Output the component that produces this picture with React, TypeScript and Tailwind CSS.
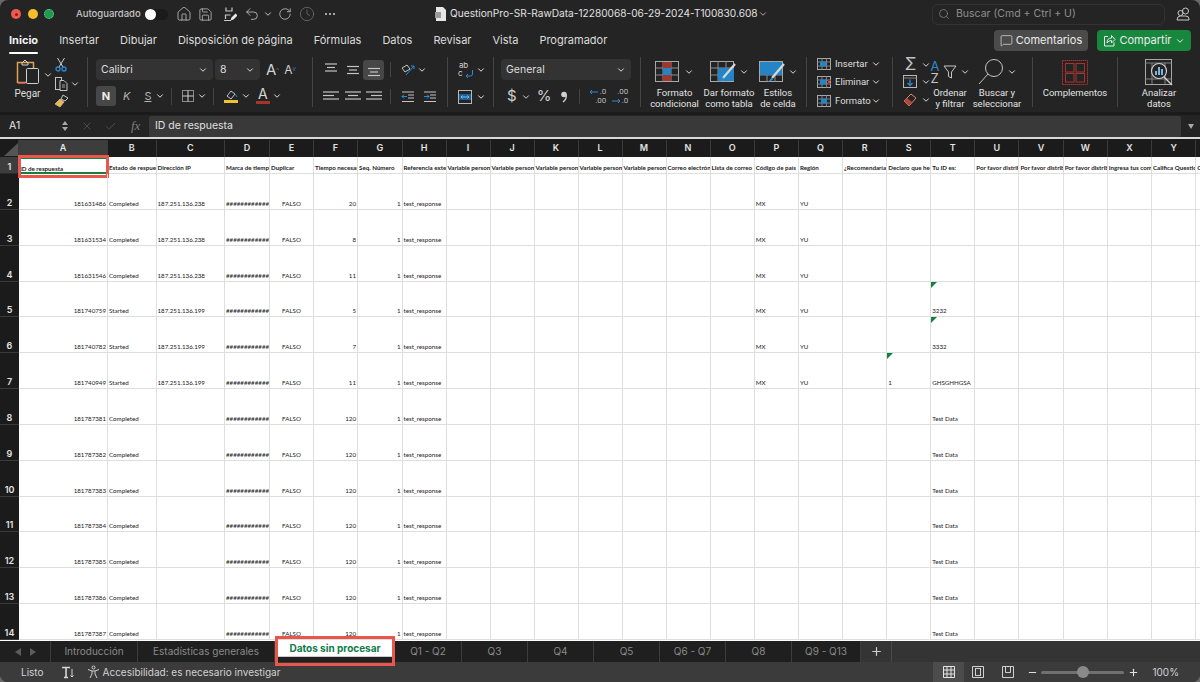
import React from 'react';
import { ChevronDown, Home, Save, Undo2, RotateCw, Clock, Search, MessageSquare, Plus, Minus, Check, X } from 'lucide-react';

const Chev = ({ className = 'text-[#d8d8d8]' }: { className?: string }) => (
  <ChevronDown size={10} strokeWidth={2.4} className={`shrink-0 ${className}`} />
);

const Svg = ({ w, h, children, className = '' }: { w: number; h: number; children: React.ReactNode; className?: string }) => (
  <svg width={w} height={h} viewBox={`0 0 ${w} ${h}`} fill="none" stroke="#c4c4c4" strokeWidth="1" className={`shrink-0 ${className}`}>
    {children}
  </svg>
);

const Lines = ({ rows, y = 2 }: { rows: [number, number][]; y?: number }) => (
  <Svg w={18} h={14}>
    {rows.map(([a, b], i) => (
      <path key={i} d={`M${a} ${y + i * 3.5}H${b}`} strokeWidth="1.2" />
    ))}
  </Svg>
);

const PasteIcon = () => (
  <Svg w={24} h={26}>
    <rect x="1.5" y="3.5" width="16" height="20" stroke="#e0a050" strokeWidth="1.5" />
    <path d="M2 24H9" stroke="#e06070" strokeWidth="1.5" />
    <path d="M6 4l3-3 3 3v2H6z" stroke="#d0d0d0" />
    <rect x="10.5" y="9.5" width="12" height="15" rx="1" fill="#242424" stroke="#d0d0d0" />
  </Svg>
);

const Cut = () => (
  <Svg w={14} h={15}>
    <path d="M3.5 1l5.5 9M10.5 1L5 10" stroke="#d0d0d0" />
    <circle cx="4" cy="12" r="2" stroke="#2e88d0" strokeWidth="1.3" />
    <circle cx="10" cy="12" r="2" stroke="#2e88d0" strokeWidth="1.3" />
  </Svg>
);

const CopyIcon = () => (
  <Svg w={15} h={15}>
    <rect x="1.5" y="1.5" width="6" height="12" />
    <path d="M6 4.5h4l3 3v7H6z" fill="#242424" />
    <path d="M8 9h3M8 11h3" strokeWidth=".8" />
  </Svg>
);

const Brush = () => (
  <Svg w={15} h={14}>
    <path d="M9 1l5 3-3 3-4-2z" fill="#242424" />
    <path d="M6 5l4 3-4 5-5-3z" fill="#e9b949" stroke="#c4c4c4" strokeWidth=".7" />
  </Svg>
);

const SaveAs = () => (
  <Svg w={16} h={16}>
    <path d="M10 14.5H3q-1.500-1.500V3q0-1.500 1.500-1.500h8l3 3V8" stroke="#c8c8c8" strokeWidth="1.2" />
    <path d="M5 1.500v3.500h6V1.500M4.500 13V9h5" stroke="#c8c8c8" strokeWidth="1.200" />
    <path d="M9.500 14.500l1-3 4-4 2 2-4 4z" fill="#e8e8e8" stroke="none" />
  </Svg>
);

const BorderIcon = () => (
  <Svg w={14} h={14}>
    <rect x="1.5" y="1.5" width="11" height="11" stroke="#8a8a8a" />
    <path d="M7 1.5v11M1.5 7h11" stroke="#d0d0d0" />
  </Svg>
);

const FillIcon = () => (
  <Svg w={15} h={15}>
    <path d="M3 7l4-5 4 3-4 5z" />
    <path d="M11 5l2 3" stroke="#1f8fe0" />
    <rect x="0" y="11" width="14" height="3" fill="#edc42d" stroke="none" />
  </Svg>
);

const FontColor = () => (
  <div className="flex flex-col items-center w-[15px] leading-none">
    <span className="text-[14px] text-[#d8d8d8] leading-[12px]">A</span>
    <span className="w-[14px] h-[3px] mt-[1px] bg-[#a5352c]" />
  </div>
);

const Orient = () => (
  <Svg w={16} h={14}>
    <path d="M2 5l5-3 3 4-5 3z" />
    <path d="M6 12l8-9M11 3h3v3" stroke="#1f8fe0" />
  </Svg>
);

const Indent = ({ flip = false }: { flip?: boolean }) => (
  <Svg w={14} h={12}>
    <path d="M1 1h12M7 4h6M7 7h6M1 10.5h12" />
    <path d={flip ? 'M1 5.500h5M4 3.500l2 2-2 2' : 'M1 5.500h5M3 3.500l-2 2 2 2'} stroke="#1f8fe0" />
  </Svg>
);

const Wrap = () => (
  <div className="relative w-[14px] h-[18px] text-[8px] leading-[8px] text-[#cfcfcf] tracking-tight">
    <span className="block ml-[1px]">ab</span>
    <span className="block">c</span>
    <svg width="9" height="9" viewBox="0 0 9 9" fill="none" stroke="#2e88d0" className="absolute right-[-2px] bottom-[1px]">
      <path d="M7.500 1v4q0 2-2 2H1M3 5L1 7l2 2" />
    </svg>
  </div>
);

const Merge = () => (
  <Svg w={14} h={14}>
    <rect x=".5" y=".5" width="13" height="13" stroke="#b8b8b8" />
    <rect x="1" y="4" width="12" height="6" fill="#1c5f94" stroke="none" />
    <path d="M3 7h8M4.500 5.500L3 7l1.500 1.500M9.500 5.500L11 7 9.500 8.500" stroke="#7cc0f0" />
  </Svg>
);

const Comma = () => (
  <Svg w={8} h={12}>
    <circle cx="4" cy="3.500" r="2.800" fill="#cfcfcf" stroke="none" />
    <path d="M6.300 4q.5 4-3.300 7" stroke="#cfcfcf" strokeWidth="1.300" />
  </Svg>
);

const DecA = ({ dir }: { dir: 'inc' | 'dec' }) => (
  <div className="relative w-[17px] h-[17px] text-[8px] leading-[8px] text-[#bdbdbd] text-right font-['Roboto',sans-serif]">
    <span className="block">{dir === 'inc' ? '.0' : '.00'}</span>
    <span className="block mt-[1px]">{dir === 'inc' ? '.00' : '.0'}</span>
    <svg width="10" height="6" viewBox="0 0 10 6" fill="none" stroke="#2e88d0" className={`absolute left-0 ${dir === 'inc' ? 'top-[1px]' : 'bottom-[1px]'}`}>
      {dir === 'inc' ? <path d="M9 3H1M3 1L1 3l2 2" /> : <path d="M1 3h8M7 1l2 2-2 2" />}
    </svg>
  </div>
);

const GridIcon = ({ variant }: { variant: 'cond' | 'table' | 'style' }) => (
  <Svg w={26} h={22}>
    <rect x=".5" y=".5" width="23" height="20" stroke="#a8a8a8" />
    <path d="M.5 7h23M.5 14h23M8 .5v20M16 .5v20" stroke="#8c8c8c" />
    {variant === 'cond' && (
      <>
        <rect x="8" y="1" width="8" height="6" fill="#a5352c" stroke="none" />
        <rect x="8" y="14" width="8" height="6" fill="#a5352c" stroke="none" />
        <rect x="8" y="7" width="8" height="7" fill="#2484c6" stroke="none" />
      </>
    )}
    {variant === 'table' && (
      <>
        <rect x="8" y="7" width="16" height="13" fill="#2484c6" stroke="none" />
        <path d="M25 3L13 17" stroke="#d8d8d8" strokeWidth="2.200" />
        <path d="M13 16l-4 5 5-2z" fill="#2e88d0" stroke="none" />
      </>
    )}
    {variant === 'style' && (
      <>
        <rect x="1" y="1" width="22" height="13" fill="#2484c6" stroke="none" />
        <path d="M25 3L13 17" stroke="#d8d8d8" strokeWidth="2.200" />
        <path d="M13 16l-4 5 5-2z" fill="#2e88d0" stroke="none" />
      </>
    )}
  </Svg>
);

const CellIcon = ({ mark }: { mark: 'ins' | 'del' | 'fmt' }) => (
  <Svg w={15} h={14}>
    <rect x=".5" y="1.5" width="13" height="11" stroke="#a8a8a8" />
    <path d="M5 1.500v11M9.500 1.500v11M.5 5h13M.5 9h13" stroke="#808080" />
    <rect x={mark === 'fmt' ? 4 : 3} y="4.5" width="6" height="5" fill="#2484c6" stroke="none" />
    {mark === 'del' && <path d="M10 5l4 4M14 5l-4 4" stroke="#d9483b" />}
  </Svg>
);

const FillDown = () => (
  <Svg w={15} h={14}>
    <rect x=".5" y=".5" width="13" height="12" stroke="#b8b8b8" />
    <path d="M.5 3h13" stroke="#808080" />
    <path d="M7 4.500v6M4.500 8L7 10.500 9.500 8" stroke="#2e88d0" strokeWidth="1.300" />
  </Svg>
);

const Eraser = () => (
  <Svg w={15} h={14}>
    <path d="M1 8l7-7 5 4-7 8z" stroke="#d98a80" />
    <path d="M1 8l3-3 5 4-3 4z" fill="#b5453a" stroke="none" />
  </Svg>
);

const SortIcon = () => (
  <div className="flex items-center h-[28px]">
    <div className="flex flex-col text-[13px] leading-[12px] w-[12px]">
      <span className="text-[#2e88d0]">A</span>
      <span className="text-[#c4c4c4]">Z</span>
    </div>
    <Svg w={14} h={14}>
      <path d="M1 1h12L8.500 7v6l-3-1.500V7z" />
    </Svg>
  </div>
);

const Magnifier = () => (
  <Svg w={26} h={28}>
    <circle cx="16" cy="10" r="8.500" />
    <path d="M10 16L1 26" />
  </Svg>
);

const Addins = () => (
  <Svg w={26} h={25}>
    <rect x=".5" y=".5" width="25" height="24" stroke="#a5352c" strokeDasharray="1.500 .5" />
    <rect x="3.5" y="3.5" width="8.5" height="8.5" stroke="#a5352c" />
    <rect x="14" y="3.5" width="8.5" height="8.5" stroke="#a5352c" />
    <rect x="3.5" y="13.5" width="8.5" height="8.5" stroke="#a5352c" />
    <rect x="14" y="13.5" width="8.5" height="8.5" stroke="#a5352c" />
  </Svg>
);

const Analyze = () => (
  <Svg w={29} h={27}>
    <rect x=".5" y=".5" width="26" height="25" stroke="#a8a8a8" />
    <path d="M.5 4h26M.5 20h26M7 4v21M20 4v21" stroke="#808080" />
    <circle cx="14" cy="12" r="7.500" fill="#242424" stroke="#d0d0d0" strokeWidth="1.200" />
    <path d="M19 18l8 8" stroke="#d0d0d0" strokeWidth="1.400" />
    <path d="M11 16v-4M14 16V8M17 16v-6" stroke="#7bb6e0" strokeWidth="2" />
  </Svg>
);

function Group({ w, children, className = '' }: { w: string; children: React.ReactNode; className?: string }) {
  return <div className={`${w} shrink-0 flex border-r border-[#444444] ${className}`}>{children}</div>;
}

function Big({ icon, lines, w, chev = true }: { icon: React.ReactNode; lines: string[]; w: string; chev?: boolean }) {
  return (
    <div className={`${w} shrink-0 flex flex-col items-center`}>
      <div className="h-[30px] shrink-0 flex items-center gap-[3px] whitespace-nowrap">
        {icon}
        {chev && <Chev />}
      </div>
      <div className="mt-[1px] font-['Roboto',sans-serif] text-[9.5px] leading-[10.5px] text-center text-[#e2e2e2] whitespace-nowrap">
        {lines.map((l) => (
          <div key={l}>{l}</div>
        ))}
      </div>
    </div>
  );
}

const cols = ['A','B','C','D','E','F','G','H','I','J','K','L','M','N','O','P','Q','R','S','T','U','V','W','X','Y','Z'];
const heads = ['ID de respuesta','Estado de respuesta','Dirección IP','Marca de tiempo','Duplicar','Tiempo necesario','Seq. Número','Referencia externa','Variable personalizada','Variable personalizada','Variable personalizada','Variable personalizada','Variable personalizada','Correo electrónico','Lista de correo','Código de país','Región','¿Recomendaría','Declaro que he','Tu ID es:','Por favor distribuye','Por favor distribuye','Por favor distribuye','Ingresa tus comentarios','Califica Questio','Califica'];

type Row = { id: string; st: string; ip: string; t: string; mx: boolean; s?: string; tu?: string; tri?: 'S' | 'T' };
const rows: Row[] = [
  { id: '181631486', st: 'Completed', ip: '187.251.136.238', t: '20', mx: true },
  { id: '181631534', st: 'Completed', ip: '187.251.136.238', t: '8', mx: true },
  { id: '181631546', st: 'Completed', ip: '187.251.136.238', t: '11', mx: true },
  { id: '181740759', st: 'Started', ip: '187.251.136.199', t: '5', mx: true, tu: '3232', tri: 'T' },
  { id: '181740782', st: 'Started', ip: '187.251.136.199', t: '7', mx: true, tu: '3332', tri: 'T' },
  { id: '181740949', st: 'Started', ip: '187.251.136.199', t: '11', mx: true, s: '1', tu: 'GHSGHHGSA', tri: 'S' },
  ...['1', '2', '3', '4', '5', '6', '7'].map((n) => ({ id: `18178738${n}`, st: 'Completed', ip: '', t: '120', mx: false, tu: 'Test Data' })),
];

const cell = 'border-r border-b border-[#dedede] overflow-hidden whitespace-nowrap flex items-end pb-[1px] px-[1px] text-[6.2px] leading-[8px] text-[#222222]';
const tri = 'absolute left-0 top-0 w-0 h-0 border-t-[6px] border-r-[6px] border-t-[#11813f] border-r-transparent';

function Cell({ v, right, center, triangle }: { v?: string; right?: boolean; center?: boolean; triangle?: boolean }) {
  return (
    <div className={`${cell} relative ${right ? 'justify-end' : ''} ${center ? 'justify-center' : ''}`}>
      {triangle && <span className={tri} />}
      {v}
    </div>
  );
}

function Sheet() {
  return (
    <div className="flex-1 min-h-0 overflow-hidden bg-white font-['Lato',sans-serif] grid grid-cols-[19px_89px_48.5px_68.5px_45px_44px_44px_44.5px_44px_44px_44px_44px_44px_44px_44px_44.2px_44.2px_44.2px_44.2px_44px_44px_44.2px_44.2px_44.2px_44.2px_44.2px_44px] grid-rows-[17px_17px_repeat(13,35.85px)]">
      <div className="bg-[#1b1b1b] border-r border-[#3a3a3a] flex items-end justify-end">
        <svg width="14" height="13" viewBox="0 0 14 13" className="mb-[1px]"><path d="M14 0v13H0z" fill="#555555" /></svg>
      </div>
      {cols.map((c, i) => (
        <div key={c} className={`${i === 0 ? 'bg-[#3d3d3d]' : 'bg-[#1b1b1b]'} border-r border-[#3a3a3a] flex items-center justify-center pb-[1px] font-['Inter',sans-serif] text-[9px] font-semibold text-[#e4e4e4]`}>
          {c}
        </div>
      ))}
      <div className="bg-[#3d3d3d] border-b border-[#2a2a2a] flex items-end justify-center pb-[1px] font-['Inter',sans-serif] text-[9px] leading-[10px] font-semibold text-[#e4e4e4]">1</div>
      {heads.map((h, i) =>
        i === 0 ? (
          <div key={i} className="relative flex items-end pb-[1px] px-[1px] text-[6.2px] leading-[8px] font-bold text-[#222222] whitespace-nowrap">
            {h}
            <span className="absolute inset-0 border-t-[2px] border-b-[2px] border-[#15803d]" />
            <span className="absolute -left-[1px] -right-[1px] -top-[2px] -bottom-[4px] border-[3px] border-[#e8564c]" />
          </div>
        ) : (
          <div key={i} className={`${cell} font-bold`}>{h}</div>
        ),
      )}
      {rows.map((r, n) => (
        <React.Fragment key={r.id}>
          <div className="bg-[#1b1b1b] border-b border-[#3a3a3a] flex items-end justify-center pb-[1px] font-['Inter',sans-serif] text-[9px] leading-[10px] font-semibold text-[#e4e4e4]">{n + 2}</div>
          <Cell v={r.id} right />
          <Cell v={r.st} />
          <Cell v={r.ip} />
          <Cell v="############" />
          <Cell v="FALSO" center />
          <Cell v={r.t} right />
          <Cell v="1" right />
          <Cell v="test_response" />
          {['I','J','K','L','M','N','O'].map((c) => <Cell key={c} />)}
          <Cell v={r.mx ? 'MX' : ''} />
          <Cell v={r.mx ? 'YU' : ''} />
          <Cell />
          <Cell v={r.s} triangle={r.tri === 'S'} />
          <Cell v={r.tu} triangle={r.tri === 'T'} />
          {['U','V','W','X','Y','Z'].map((c) => <Cell key={c} />)}
        </React.Fragment>
      ))}
    </div>
  );
}

function SheetTab({ label, w }: { label: string; w: string }) {
  return (
    <div className={`${w} shrink-0 flex items-center justify-center border-r border-[#3c3c3c] text-[10px] text-[#8a8a8a]`}>
      {label}
    </div>
  );
}

export default function App() {
  return (
    <div className="w-[1200px] h-[682px] bg-[#6a6a6a] overflow-hidden font-['Inter',sans-serif]">
      <div className="w-full h-full rounded-[8px] overflow-hidden flex flex-col bg-[#242424] text-[#e6e6e6]">
        {/* title bar */}
        <div className="h-[28px] shrink-0 flex items-center pl-[11px] pr-[8px]">
          <span className="w-[10px] h-[10px] rounded-full bg-[#ee5a50] flex items-center justify-center"><span className="w-[3px] h-[3px] rounded-full bg-[#8e1c16]" /></span>
          <span className="ml-[7px] w-[10px] h-[10px] rounded-full bg-[#f5bd2e]" />
          <span className="ml-[6px] w-[10px] h-[10px] rounded-full bg-[#1f9a4e] border border-dotted border-[#7fd6a0]" />
          <span className="ml-[22px] w-[63px] whitespace-nowrap text-[9.5px] font-medium text-[#c4c4c4]">Autoguardado</span>
          <span className="ml-[6px] w-[23px] h-[11px] rounded-full bg-[#1b1b1b] flex items-center">
            <span className="w-[11px] h-[11px] rounded-full bg-white" />
          </span>
          <Home size={16} strokeWidth={1.2} className="ml-[8px] shrink-0 text-[#c8c8c8]" />
          <Save size={15} strokeWidth={1.2} className="ml-[6px] shrink-0 text-[#c8c8c8]" />
          <span className="ml-[8px]"><SaveAs /></span>
          <Undo2 size={16} strokeWidth={1.2} className="ml-[7px] shrink-0 text-[#c8c8c8]" />
          <Chev className="ml-[3px] text-[#c8c8c8]" />
          <RotateCw size={14} strokeWidth={1.3} className="ml-[5px] shrink-0 text-[#c8c8c8]" />
          <Clock size={16} strokeWidth={1} className="ml-[7px] shrink-0 text-[#7c7c7c]" />
          <span className="ml-[10px] flex gap-[2px]">
            <i className="w-[2px] h-[2px] rounded-full bg-[#d0d0d0]" />
            <i className="w-[2px] h-[2px] rounded-full bg-[#d0d0d0]" />
            <i className="w-[2px] h-[2px] rounded-full bg-[#d0d0d0]" />
          </span>
          <svg width="12" height="14" viewBox="0 0 12 14" className="ml-[100px] shrink-0">
            <path d="M1 0h7l3 3v11H1z" fill="#e6e6e6" />
            <rect x="0" y="5" width="6" height="6" fill="#9a9a9a" />
          </svg>
          <span className="ml-[3px] w-[308px] shrink-0 text-[10.15px] text-[#e0e0e0] whitespace-nowrap">QuestionPro-SR-RawData-12280068-06-29-2024-T100830.608</span>
          <Chev className="ml-[0px] text-[#a8a8a8]" />
          <div className="ml-[164px] w-[233px] shrink-0 h-[21px] rounded-[6px] border border-[#333333] flex items-center pl-[5px] gap-[6px] text-[10.5px] text-[#8e8e8e]">
            <Search size={12} strokeWidth={1.4} />
            Buscar (Cmd + Ctrl + U)
          </div>
          <svg width="14" height="14" viewBox="0 0 14 14" fill="none" stroke="#c8c8c8" className="ml-[11px] shrink-0">
            <circle cx="9.500" cy="4" r="3" />
            <circle cx="4.500" cy="6" r="2.500" />
            <path d="M1 13q0-4 3.500-4h5q3.500 0 3.500 3v1z" />
          </svg>
        </div>

        {/* tabs */}
        <div className="h-[24px] shrink-0 flex items-center pl-[9px] pr-[9px] pt-[1px] text-[11px] text-[#dcdcdc] gap-[21px] whitespace-nowrap">
          <span className="relative font-bold text-[#f2f2f2]">Inicio<span className="absolute left-0 right-0 -bottom-[5px] h-[2px] rounded bg-white" /></span>
          <span>Insertar</span>
          <span>Dibujar</span>
          <span>Disposición de página</span>
          <span>Fórmulas</span>
          <span>Datos</span>
          <span>Revisar</span>
          <span>Vista</span>
          <span>Programador</span>
          <div className="ml-auto w-[94px] h-[21px] rounded-[4px] bg-[#4b4b4b] flex items-center justify-center gap-[3px] text-[11px] text-[#ececec]">
            <MessageSquare size={13} strokeWidth={1.2} />Comentarios
          </div>
          <div className="-ml-[12px] w-[94px] h-[21px] rounded-[4px] bg-[#18873e] flex items-center justify-center gap-[3px] text-[11px] text-[#ececec]">
            <svg width="13" height="13" viewBox="0 0 13 13" fill="none" stroke="#ececec">
              <path d="M5 2.500H1.500v9.500h9.500V8.500" />
              <path d="M4 9q0-5 4.500-5V1.500L12 5.500 8.500 9V6.500Q5.500 6.500 4 9z" />
            </svg>
            Compartir<Chev className="text-[#ececec]" />
          </div>
        </div>

        {/* ribbon */}
        <div className="h-[60px] shrink-0 flex py-[5px] text-[10px] text-[#dedede]">
          <Group w="w-[88px]" className="pl-[12px]">
            <div className="w-[31px] flex flex-col items-center">
              <div className="flex items-start pt-[2px] h-[30px] shrink-0"><PasteIcon /></div>
              <span className="mt-[1px] font-['Roboto',sans-serif] text-[10px] leading-[11px]">Pegar</span>
            </div>
            <div className="pt-[13px] w-[7px]"><Chev /></div>
            <div className="ml-[4px] flex flex-col gap-[3px]">
              <span className="mb-[1px]"><Cut /></span>
              <div className="flex items-center gap-[1px]"><CopyIcon /><Chev /></div>
              <Brush />
            </div>
          </Group>

          <Group w="w-[225px]" className="pl-[8px] pt-[2px] flex-col">
            <div className="flex items-center gap-[2px]">
              <div className="w-[117px] h-[21px] rounded-[4px] bg-[#333333] flex items-center justify-between px-[5px] text-[10.5px]">Calibri<Chev /></div>
              <div className="w-[45px] h-[21px] rounded-[4px] bg-[#333333] flex items-center justify-between px-[5px] text-[10.5px]">8<Chev /></div>
              <span className="ml-[4px] text-[15px] leading-none text-[#d0d0d0]">A<sup className="text-[#2e88d0] text-[6px]">^</sup></span>
              <span className="ml-[3px] text-[12px] leading-none text-[#d0d0d0]">A<sup className="text-[#2e88d0] text-[6px]">v</sup></span>
            </div>
            <div className="mt-[6px] flex items-center text-[11px]">
              <span className="w-[20px] h-[20px] rounded-[3px] bg-[#474747] flex items-center justify-center font-bold text-[#eeeeee]">N</span>
              <span className="ml-[7px] italic text-[#b4b4b4]">K</span>
              <span className="ml-[14px] underline text-[#b4b4b4]">S</span>
              <Chev className="ml-[4px]" />
              <span className="ml-[6px] w-px h-[17px] bg-[#444444]" />
              <span className="ml-[9px]"><BorderIcon /></span>
              <Chev className="ml-[2px]" />
              <span className="ml-[6px] w-px h-[17px] bg-[#444444]" />
              <span className="ml-[10px]"><FillIcon /></span>
              <Chev className="ml-[2px]" />
              <span className="ml-[4px]"><FontColor /></span>
              <Chev className="ml-[2px]" />
            </div>
          </Group>

          <Group w="w-[135px]" className="pl-[9px] pt-[2px] flex-col">
            <div className="flex items-center h-[21px]">
              <Lines y={1} rows={[[3, 15], [5, 13], [3, 15]]} />
              <span className="ml-[4px]"><Lines y={3.5} rows={[[3, 15], [5, 13], [3, 15]]} /></span>
              <span className="ml-[1px] w-[21px] h-[20px] rounded-[3px] bg-[#474747] flex items-center justify-center"><Lines y={5.5} rows={[[3, 15], [5, 13], [3, 15]]} /></span>
              <span className="ml-[6px] w-px h-[15px] bg-[#444444]" />
              <span className="ml-[9px]"><Orient /></span>
              <Chev className="ml-[1px]" />
            </div>
            <div className="flex items-center h-[21px] mt-[6px]">
              <Lines rows={[[1, 17], [1, 12], [1, 17]]} />
              <span className="ml-[4px]"><Lines rows={[[1, 17], [4, 14], [1, 17]]} /></span>
              <span className="ml-[3px]"><Lines rows={[[1, 17], [6, 17], [1, 17]]} /></span>
              <span className="ml-[7px] w-px h-[15px] bg-[#444444]" />
              <span className="ml-[10px]"><Indent /></span>
              <span className="ml-[8px]"><Indent flip /></span>
            </div>
          </Group>

          <Group w="w-[46px]" className="pl-[10px] pt-[2px] flex-col">
            <div className="flex items-center gap-[3px] h-[21px]"><Wrap /><Chev className="ml-[1px]" /></div>
            <div className="flex items-center gap-[3px] h-[21px] mt-[6px]"><Merge /><Chev className="ml-[1px]" /></div>
          </Group>

          <Group w="w-[147px]" className="pl-[7px] pt-[2px] flex-col">
            <div className="w-[130px] h-[21px] rounded-[4px] bg-[#333333] flex items-center justify-between px-[5px] text-[10.5px]">General<Chev /></div>
            <div className="flex items-center h-[21px] mt-[6px] text-[#cfcfcf]">
              <span className="ml-[6px] text-[15px]">$</span>
              <Chev className="ml-[4px]" />
              <span className="ml-[6px] text-[15px]">%</span>
              <span className="ml-[9px]"><Comma /></span>
              <span className="ml-[11px] w-px h-[15px] bg-[#444444]" />
              <span className="ml-[9px]"><DecA dir="inc" /></span>
              <span className="ml-[5px]"><DecA dir="dec" /></span>
            </div>
          </Group>

          <Group w="w-[166px]" className="pl-[10px] text-[#e2e2e2]">
            <Big w="w-[47px]" icon={<GridIcon variant="cond" />} lines={['Formato', 'condicional']} />
            <Big w="w-[62px]" icon={<GridIcon variant="table" />} lines={['Dar formato', 'como tabla']} />
            <Big w="w-[36px]" icon={<GridIcon variant="style" />} lines={['Estilos', 'de celda']} />
          </Group>

          <Group w="w-[86px]" className="pl-[10px] flex-col gap-[4px] font-['Roboto',sans-serif] text-[9.5px]">
            {([['Insertar', 'ins'], ['Eliminar', 'del'], ['Formato', 'fmt']] as const).map(([t, m]) => (
              <div key={t} className="flex items-center h-[14.5px]">
                <CellIcon mark={m} />
                <span className="ml-[3px] w-[36px]">{t}</span>
                <Chev />
              </div>
            ))}
          </Group>

          <Group w="w-[140px]" className="pl-[10px]">
            <div className="w-[28px] flex flex-col gap-[3px] text-[#c4c4c4]">
              <div className="flex items-center h-[15px] gap-[3px]"><span className="w-[15px] text-[17px] leading-none text-center">Σ</span><Chev /></div>
              <div className="flex items-center h-[15px] gap-[3px]"><FillDown /><Chev /></div>
              <div className="flex items-center h-[15px] gap-[3px]"><Eraser /><Chev /></div>
            </div>
            <Big w="w-[38px]" icon={<SortIcon />} lines={['Ordenar', 'y filtrar']} />
            <Big w="w-[56px]" icon={<Magnifier />} lines={['Buscar y', 'seleccionar']} />
          </Group>

          <Group w="w-[85px]" className="justify-center">
            <Big w="w-full" chev={false} icon={<Addins />} lines={['Complementos']} />
          </Group>

          <div className="w-[82px] shrink-0 flex justify-center">
            <Big w="w-full" chev={false} icon={<Analyze />} lines={['Analizar', 'datos']} />
          </div>
        </div>

        {/* formula bar */}
        <div className="h-[3px] shrink-0 bg-[#1a1a1a]" />
        <div className="h-[22px] shrink-0 flex items-center pl-[9px] pr-[4px] text-[10.5px]">
          <span className="w-[52px]">A1</span>
          <div className="w-[8px] flex flex-col gap-[2px] items-center">
            <span className="w-0 h-0 border-x-[3px] border-x-transparent border-b-[4px] border-b-[#a8a8a8]" />
            <span className="w-0 h-0 border-x-[3px] border-x-transparent border-t-[4px] border-t-[#a8a8a8]" />
          </div>
          <X size={12} strokeWidth={1.3} className="ml-[12px] text-[#5e5e5e]" />
          <Check size={13} strokeWidth={1.2} className="ml-[11px] text-[#5e5e5e]" />
          <span className="ml-[14px] w-[15px] font-['Liberation_Serif',serif] italic text-[13px] text-[#7e7e7e]">fx</span>
          <div className="ml-[3px] flex-1 h-[21px] rounded-[2px] bg-[#393939] flex items-center pl-[6px] text-[#e0e0e0]">ID de respuesta</div>
          <span className="ml-[7px] mr-[2px] w-0 h-0 border-x-[3.5px] border-x-transparent border-t-[5px] border-t-[#a8a8a8]" />
        </div>
        <div className="h-[3px] shrink-0 bg-[#d8d8d8] border-b border-[#1a1a1a]" />

        <Sheet />

        {/* sheet tabs */}
        <div className="h-[21px] shrink-0 flex bg-[#343434]">
          <div className="w-[51px] shrink-0 bg-[#1f1f1f] flex items-center justify-center gap-[9px] border-r border-[#3c3c3c]">
            <span className="w-0 h-0 border-y-[4px] border-y-transparent border-r-[6px] border-r-[#5c5c5c]" />
            <span className="w-0 h-0 border-y-[4px] border-y-transparent border-l-[6px] border-l-[#5c5c5c]" />
          </div>
          <div className="flex bg-[#1f1f1f]">
            <SheetTab label="Introducción" w="w-[87px]" />
            <SheetTab label="Estadísticas generales" w="w-[137px]" />
            <div className="relative w-[120px] shrink-0 z-10">
              <div className="mx-[3px] h-[16px] bg-white flex items-center justify-center text-[10px] font-bold text-[#0f7b4a] border-b-[1px] border-[#cccccc]">Datos sin procesar</div>
              <span className="absolute left-0 right-0 -top-[5px] -bottom-[4px] border-[3px] border-[#e8564c]" />
            </div>
            <SheetTab label="Q1 - Q2" w="w-[67px]" />
            <SheetTab label="Q3" w="w-[66px]" />
            <SheetTab label="Q4" w="w-[66px]" />
            <SheetTab label="Q5" w="w-[66px]" />
            <SheetTab label="Q6 - Q7" w="w-[66px]" />
            <SheetTab label="Q8" w="w-[66px]" />
            <SheetTab label="Q9 - Q13" w="w-[69px]" />
          </div>
          <div className="w-[31px] flex items-center justify-center border-r border-[#4a4a4a] text-[#cfcfcf]"><Plus size={13} strokeWidth={2.2} /></div>
        </div>

        {/* status bar */}
        <div className="h-[20px] shrink-0 flex items-center bg-[#3b3b3b] pl-[21px] text-[10px] text-[#d2d2d2]">
          <span>Listo</span>
          <svg width="13" height="13" viewBox="0 0 13 13" fill="none" stroke="#d8d8d8" className="ml-[17px]">
            <path d="M1 1.500h8M5 1.500v10M3 11.500h4" strokeWidth="1.600" />
            <path d="M11 3v8M9.500 9.500L11 11l1.500-1.500" />
          </svg>
          <svg width="13" height="14" viewBox="0 0 13 14" fill="none" stroke="#d0d0d0" className="ml-[13px]">
            <circle cx="6.500" cy="2.500" r="1.500" />
            <path d="M1 4.500l4 1.500h3l4-1.500M5 6v3l-2 4M8 6v3l2 4" />
          </svg>
          <span className="ml-[3px]">Accesibilidad: es necesario investigar</span>
          <div className="ml-auto w-[31px] h-[20px] bg-[#4c4c4c] flex items-center justify-center">
            <svg width="12" height="12" viewBox="0 0 12 12" fill="none" stroke="#e4e4e4"><path d="M.5.5h11v11H.5zM4 .5v11M8 .5v11M.5 4h11M.5 8h11" /></svg>
          </div>
          <svg width="12" height="12" viewBox="0 0 12 12" fill="none" stroke="#d0d0d0" className="ml-[8px]"><path d="M.5.5h11v11H.5z" /><rect x="3.5" y="2.5" width="5" height="7" /></svg>
          <svg width="12" height="12" viewBox="0 0 12 12" fill="none" stroke="#d0d0d0" className="ml-[18px]"><path d="M.5.5h11v11H.5zM3.500.5v6h5v-6" /></svg>
          <Minus size={11} strokeWidth={2.4} className="ml-[13px] text-[#e0e0e0]" />
          <div className="ml-[3px] w-[83px] h-[3px] rounded-full bg-[#707070] flex items-center">
            <span className="ml-[36px] w-[12px] h-[12px] rounded-full bg-[#8a8a8a]" />
          </div>
          <Plus size={11} strokeWidth={2.4} className="ml-[4px] text-[#e0e0e0]" />
          <span className="ml-[13px] mr-[21px]">100%</span>
        </div>
      </div>
    </div>
  );
}
